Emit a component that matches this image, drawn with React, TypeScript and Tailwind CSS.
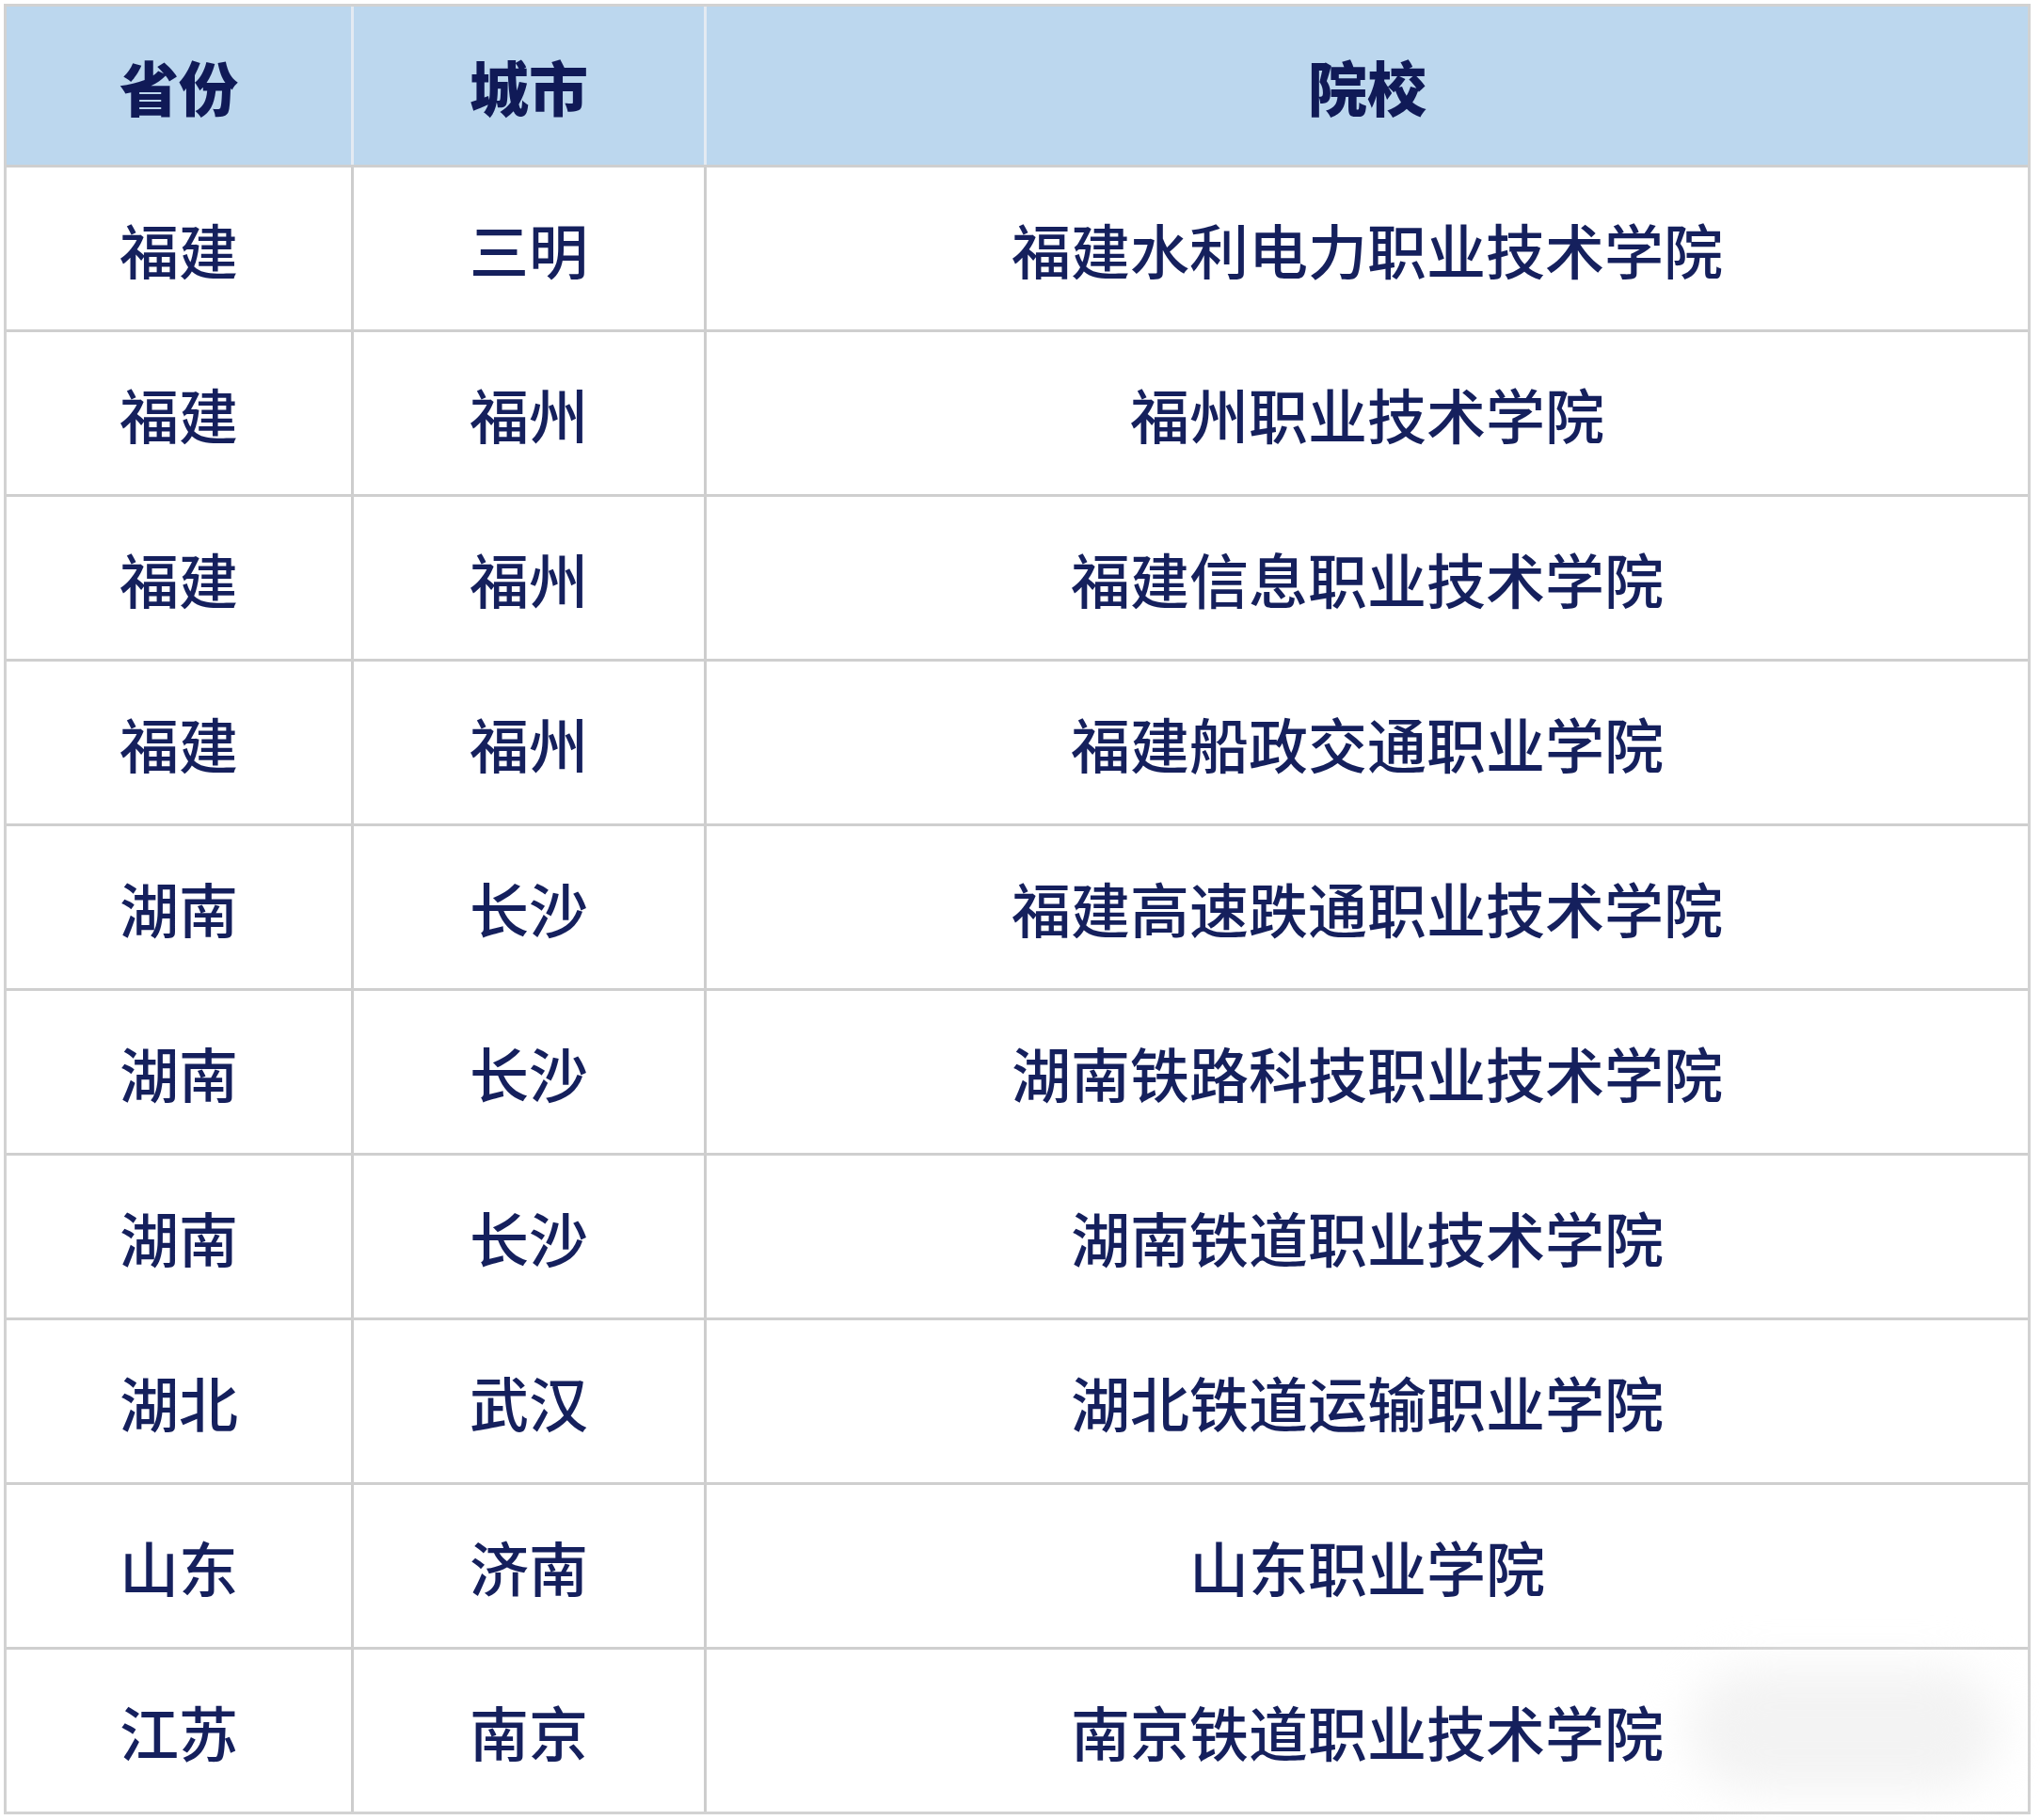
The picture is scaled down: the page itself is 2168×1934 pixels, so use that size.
import React from "react";

type Row = { province: string; city: string; school: string };

const rows: Row[] = [
  { province: "福建", city: "三明", school: "福建水利电力职业技术学院" },
  { province: "福建", city: "福州", school: "福州职业技术学院" },
  { province: "福建", city: "福州", school: "福建信息职业技术学院" },
  { province: "福建", city: "福州", school: "福建船政交通职业学院" },
  { province: "湖南", city: "长沙", school: "福建高速跌通职业技术学院" },
  { province: "湖南", city: "长沙", school: "湖南铁路科技职业技术学院" },
  { province: "湖南", city: "长沙", school: "湖南铁道职业技术学院" },
  { province: "湖北", city: "武汉", school: "湖北铁道运输职业学院" },
  { province: "山东", city: "济南", school: "山东职业学院" },
  { province: "江苏", city: "南京", school: "南京铁道职业技术学院" },
];

const font = "font-['Noto_Sans_CJK_SC','Noto_Sans',sans-serif]";

export default function App() {
  return (
    <div className={`min-h-screen bg-white pl-[4px] pt-[4px] ${font}`}>
      <div className="w-[2154px] border-[3px] border-[#d2d2d2] bg-white">
        {/* header */}
        <div className="flex h-[168px] bg-[#bcd7ee] text-[63px] font-black text-[#101a57]">
          <div className="flex w-[366px] items-center justify-center">省份</div>
          <div className="w-[3px] bg-[#e3eaf2]" />
          <div className="flex w-[372px] items-center justify-center">城市</div>
          <div className="w-[3px] bg-[#e3eaf2]" />
          <div className="flex flex-1 items-center justify-center">院校</div>
        </div>

        {rows.map((r, i) => (
          <div
            key={i}
            className="flex h-[175px] border-t-[3px] border-[#cfcfcf] text-[63px] font-medium text-[#15205d]"
          >
            <div className="flex w-[366px] items-center justify-center">{r.province}</div>
            <div className="w-[3px] bg-[#cdcdcd]" />
            <div className="flex w-[372px] items-center justify-center">{r.city}</div>
            <div className="w-[3px] bg-[#cdcdcd]" />
            <div className="relative flex flex-1 items-center justify-center">
              {i === rows.length - 1 && (
                <div className="absolute right-[30px] top-[20px] h-[130px] w-[330px] rounded-full bg-[#f3f3f3] blur-xl" />
              )}
              <span className="relative">{r.school}</span>
            </div>
          </div>
        ))}
      </div>
    </div>
  );
}
